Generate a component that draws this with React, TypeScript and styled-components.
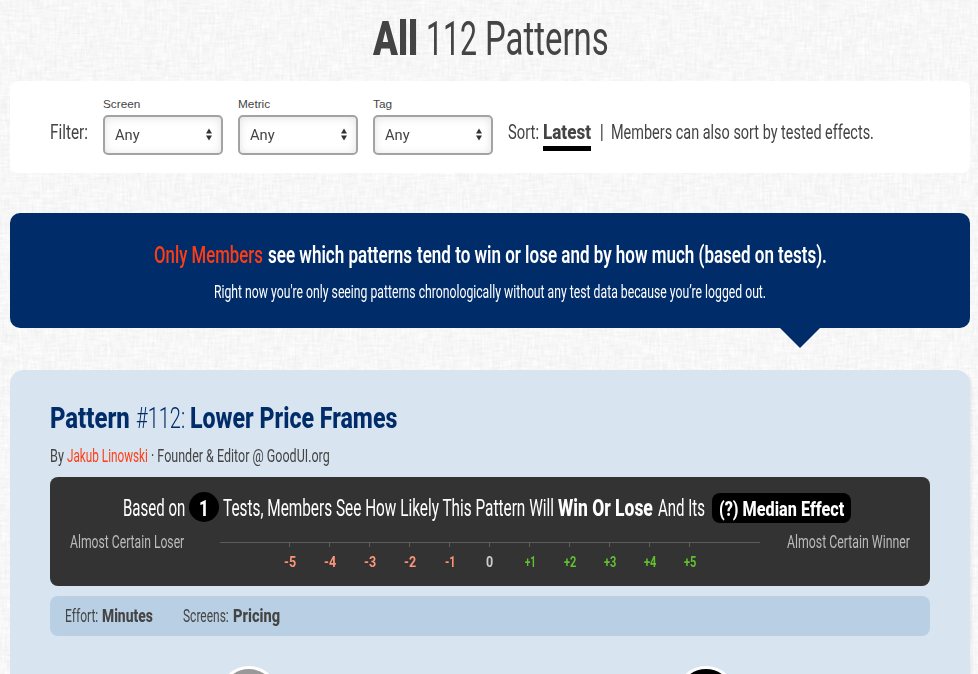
import React, { useLayoutEffect, useRef, useState } from 'react';
import styled, { createGlobalStyle } from 'styled-components';

const GlobalStyle = createGlobalStyle`
  * { box-sizing: border-box; }
  html, body { margin: 0; padding: 0; height: 100%; overflow: hidden; background: #f7f7f7; }
  body { font-family: Roboto, "Liberation Sans", sans-serif; color: #444; }
`;

/* Condensed lettering: each run is narrowed to its own set width. */
const Slot = styled.span<{ $w: number; $ml: number }>`
  display: block;
  flex: none;
  width: ${(p) => p.$w}px;
  margin-left: ${(p) => p.$ml}px;
  white-space: nowrap;
`;

const Glyphs = styled.span<{ $size: number; $weight: number; $color?: string }>`
  display: inline-block;
  transform-origin: 0 50%;
  font-size: ${(p) => p.$size}px;
  font-weight: ${(p) => p.$weight};
  color: ${(p) => p.$color || 'inherit'};
`;

type RunProps = { w: number; ml?: number; size: number; weight?: number; color?: string; children: string };

function Run({ w, ml = 0, size, weight = 380, color, children }: RunProps) {
  const ref = useRef<HTMLSpanElement>(null);
  const [scale, setScale] = useState(1);
  useLayoutEffect(() => {
    if (ref.current) setScale(w / ref.current.offsetWidth);
  }, [w, children]);
  return (
    <Slot $w={w} $ml={ml}>
      <Glyphs ref={ref} $size={size} $weight={weight} $color={color} style={{ transform: `scaleX(${scale})` }}>
        {children}
      </Glyphs>
    </Slot>
  );
}

const Page = styled.div`
  position: relative;
  height: 674px;
  overflow: hidden;
`;

const Texture = styled.svg`
  position: absolute;
  inset: 0;
  width: 100%;
  height: 100%;
`;

const Content = styled.main`
  position: relative;
  display: flex;
  flex-direction: column;
  width: 960px;
  margin-left: 10px;
`;

const TextLine = styled.div<{ $h: number; $pl?: number; $mt?: number }>`
  display: flex;
  align-items: baseline;
  height: ${(p) => p.$h}px;
  line-height: ${(p) => p.$h}px;
  margin-top: ${(p) => p.$mt || 0}px;
  padding-left: ${(p) => p.$pl || 0}px;
`;

const Title = styled.h1`
  display: flex;
  align-items: baseline;
  height: 60px;
  margin: 9px 0 12px;
  padding-left: 363px;
  line-height: 60px;
`;

const FilterBar = styled.section`
  display: flex;
  height: 92px;
  padding-left: 40px;
  background: #fff;
  border-radius: 8px;
`;

const Fields = styled.div`
  display: flex;
  gap: 15px;
  margin: 0 15px;
  padding-top: 17px;
`;

const Field = styled.div`
  width: 120px;
`;

const FieldLabel = styled.div`
  height: 17px;
  font: 11.8px/13px "Liberation Sans", sans-serif;
`;

const Select = styled.div`
  display: flex;
  align-items: center;
  justify-content: space-between;
  height: 40px;
  padding: 0 9px 2px 9.5px;
  border: 2px solid #a3a3a3;
  border-radius: 5px;
  background: #fff;
  box-shadow: inset 0 1px 8px rgba(0, 0, 0, 0.12);
`;

const Current = styled.div`
  height: 34px;
  margin-left: 4px;
  border-bottom: 5px solid #000;
`;

const Banner = styled.section`
  position: relative;
  height: 115px;
  margin-top: 40px;
  padding-top: 26px;
  border-radius: 10px;
  background: #002d6a;
  color: #fff;
`;

const Pointer = styled.i`
  position: absolute;
  top: 115px;
  left: 770px;
  border: 20px solid transparent;
  border-top-color: #002d6a;
  border-bottom: 0;
`;

const Card = styled.article`
  height: 420px;
  margin-top: 42px;
  padding: 32px 40px 0;
  border-radius: 14px;
  background: #d8e4ef;
  box-shadow: 2px 2px 3px rgba(0, 0, 0, 0.06);
`;

const Likelihood = styled.section`
  height: 109px;
  margin-top: 7px;
  padding-top: 15px;
  border-radius: 8px;
  background: #333;
  color: #fff;
`;

const Count = styled.span`
  display: flex;
  flex: none;
  justify-content: center;
  align-self: flex-start;
  width: 30px;
  height: 30px;
  margin-left: 4px;
  border-radius: 50%;
  background: #000;
`;

const Pill = styled.span`
  flex: none;
  align-self: flex-start;
  width: 139px;
  height: 30px;
  margin: 1px 0 0 7px;
  padding-left: 7px;
  border-radius: 8px;
  background: #000;
`;

const ScaleRow = styled.div`
  display: flex;
  justify-content: space-between;
  height: 54px;
  margin-top: 3px;
  padding: 0 20px;
  color: #bbb;
  line-height: 27px;
`;

const Axis = styled.div`
  display: flex;
  justify-content: center;
  width: 540px;
  height: 40px;
  margin: 14px 27px 0 36px;
  border-top: 1px solid #5c5c5c;
`;

const Tick = styled.div<{ $tone: string }>`
  display: flex;
  flex-direction: column;
  align-items: center;
  width: 40px;
  color: ${(p) => p.$tone};
  &::before {
    content: '';
    width: 1px;
    height: 4px;
    margin-right: 1px;
    background: #5c5c5c;
  }
`;

const TickLabel = styled.div`
  height: 18px;
  margin-top: 6px;
  line-height: 18px;
`;

const Facts = styled.section`
  display: flex;
  align-items: baseline;
  height: 40px;
  margin-top: 10px;
  padding-left: 15px;
  border-radius: 8px;
  background: #b9cfe4;
  line-height: 40px;
`;

const Variants = styled.div`
  display: flex;
  gap: 397px;
  margin: 30px 0 0 169px;
`;

const Marker = styled.div<{ $fill: string }>`
  width: 60px;
  height: 60px;
  border: 3px solid #fff;
  border-radius: 50%;
  background: ${(p) => p.$fill};
`;

const Arrows = () => (
  <svg width="6" height="13" viewBox="0 0 6 13" fill="#333">
    <path d="M3 0.5 6 5.5H0zM3 12.5 0 7.5h6z" />
  </svg>
);

const LinenTexture = () => (
  <Texture>
    <filter id="linen" x="0" y="0" width="100%" height="100%" colorInterpolationFilters="sRGB">
      <feTurbulence type="fractalNoise" baseFrequency="0.07 0.4" numOctaves="3" seed="4" result="h" />
      <feTurbulence type="fractalNoise" baseFrequency="0.4 0.07" numOctaves="3" seed="9" result="v" />
      <feComposite in="h" in2="v" operator="arithmetic" k1="0" k2="0.5" k3="0.5" k4="0" />
      <feColorMatrix values="0.11 0 0 0 0.913  0.11 0 0 0 0.913  0.11 0 0 0 0.913  0 0 0 0 1" />
    </filter>
    <rect width="100%" height="100%" filter="url(#linen)" />
  </Texture>
);

const ORANGE = '#ff3d14';
const NAVY = '#002d6a';
const FILTERS = ['Screen', 'Metric', 'Tag'];
const EFFECTS = ['-5', '-4', '-3', '-2', '-1', '0', '+1', '+2', '+3', '+4', '+5'];
const toneOf = (s: string) => (s[0] === '-' ? '#ff9478' : s[0] === '+' ? '#62c12f' : '#ccc');
const labelWidth = (s: string) => (s === '0' ? 7.5 : s.endsWith('1') ? 11 : 12.5);

export default function App() {
  return (
    <>
      <GlobalStyle />
      <Page>
        <LinenTexture />
        <Content>
          <Title>
            <Run w={45} size={48} weight={900}>All</Run>
            <Run w={51} ml={8} size={48} weight={370}>112</Run>
            <Run w={124} ml={7.5} size={48} weight={370}>Patterns</Run>
          </Title>

          <FilterBar>
            <TextLine $h={30} $mt={36}>
              <Run w={38} size={21}>Filter:</Run>
            </TextLine>
            <Fields>
              {FILTERS.map((name) => (
                <Field key={name}>
                  <FieldLabel>{name}</FieldLabel>
                  <Select>
                    <Run w={24.5} size={15} weight={400}>Any</Run>
                    <Arrows />
                  </Select>
                </Field>
              ))}
            </Fields>
            <TextLine $h={30} $mt={36}>
              <Run w={31} size={21}>Sort:</Run>
              <Current>
                <Run w={48} size={21} weight={850}>Latest</Run>
              </Current>
              <Run w={5} ml={7.5} size={20} weight={300}>|</Run>
              <Run w={263} ml={7.5} size={21}>Members can also sort by tested effects.</Run>
            </TextLine>
          </FilterBar>

          <Banner>
            <TextLine $h={32} $pl={144}>
              <Run w={109} size={24} weight={500} color={ORANGE}>Only Members</Run>
              <Run w={144} ml={5} size={24} weight={580}>see which patterns</Run>
              <Run w={410} ml={5} size={24} weight={580}>tend to win or lose and by how much (based on tests).</Run>
            </TextLine>
            <TextLine $h={28} $pl={204} $mt={7}>
              <Run w={552} size={18.5}>Right now you're only seeing patterns chronologically without any test data because you’re logged out.</Run>
            </TextLine>
            <Pointer />
          </Banner>

          <Card>
            <TextLine $h={32}>
              <Run w={80} size={29} weight={850} color={NAVY}>Pattern</Run>
              <Run w={49} ml={6} size={29} weight={360} color={NAVY}>#112:</Run>
              <Run w={207} ml={5} size={29} weight={850} color={NAVY}>Lower Price Frames</Run>
            </TextLine>
            <TextLine $h={28} $mt={8}>
              <Run w={14} size={19}>By</Run>
              <Run w={81} ml={3} size={19} color={ORANGE}>Jakub Linowski</Run>
              <Run w={179} ml={3} size={19}>· Founder &amp; Editor @ GoodUI.org</Run>
            </TextLine>

            <Likelihood>
              <TextLine $h={33} $pl={73}>
                <Run w={62} size={23}>Based on</Run>
                <Count>
                  <Run w={10} size={22} weight={850}>1</Run>
                </Count>
                <Run w={331} ml={4} size={23}>Tests, Members See How Likely This Pattern Will</Run>
                <Run w={95} ml={4} size={23} weight={850}>Win Or Lose</Run>
                <Run w={47} ml={5} size={23}>And Its</Run>
                <Pill>
                  <Run w={125} size={20.5} weight={850}>(?) Median Effect</Run>
                </Pill>
              </TextLine>
              <ScaleRow>
                <Run w={114} size={19}>Almost Certain Loser</Run>
                <Axis>
                  {EFFECTS.map((e) => (
                    <Tick key={e} $tone={toneOf(e)}>
                      <TickLabel>
                        <Run w={labelWidth(e)} size={15} weight={750}>{e}</Run>
                      </TickLabel>
                    </Tick>
                  ))}
                </Axis>
                <Run w={123} size={19}>Almost Certain Winner</Run>
              </ScaleRow>
            </Likelihood>

            <Facts>
              <Run w={33} size={19}>Effort:</Run>
              <Run w={51} ml={3.5} size={19} weight={850}>Minutes</Run>
              <Run w={46} ml={30.5} size={19}>Screens:</Run>
              <Run w={47} ml={3.5} size={19} weight={850}>Pricing</Run>
            </Facts>

            <Variants>
              <Marker $fill="#999" />
              <Marker $fill="#000" />
            </Variants>
          </Card>
        </Content>
      </Page>
    </>
  );
}
